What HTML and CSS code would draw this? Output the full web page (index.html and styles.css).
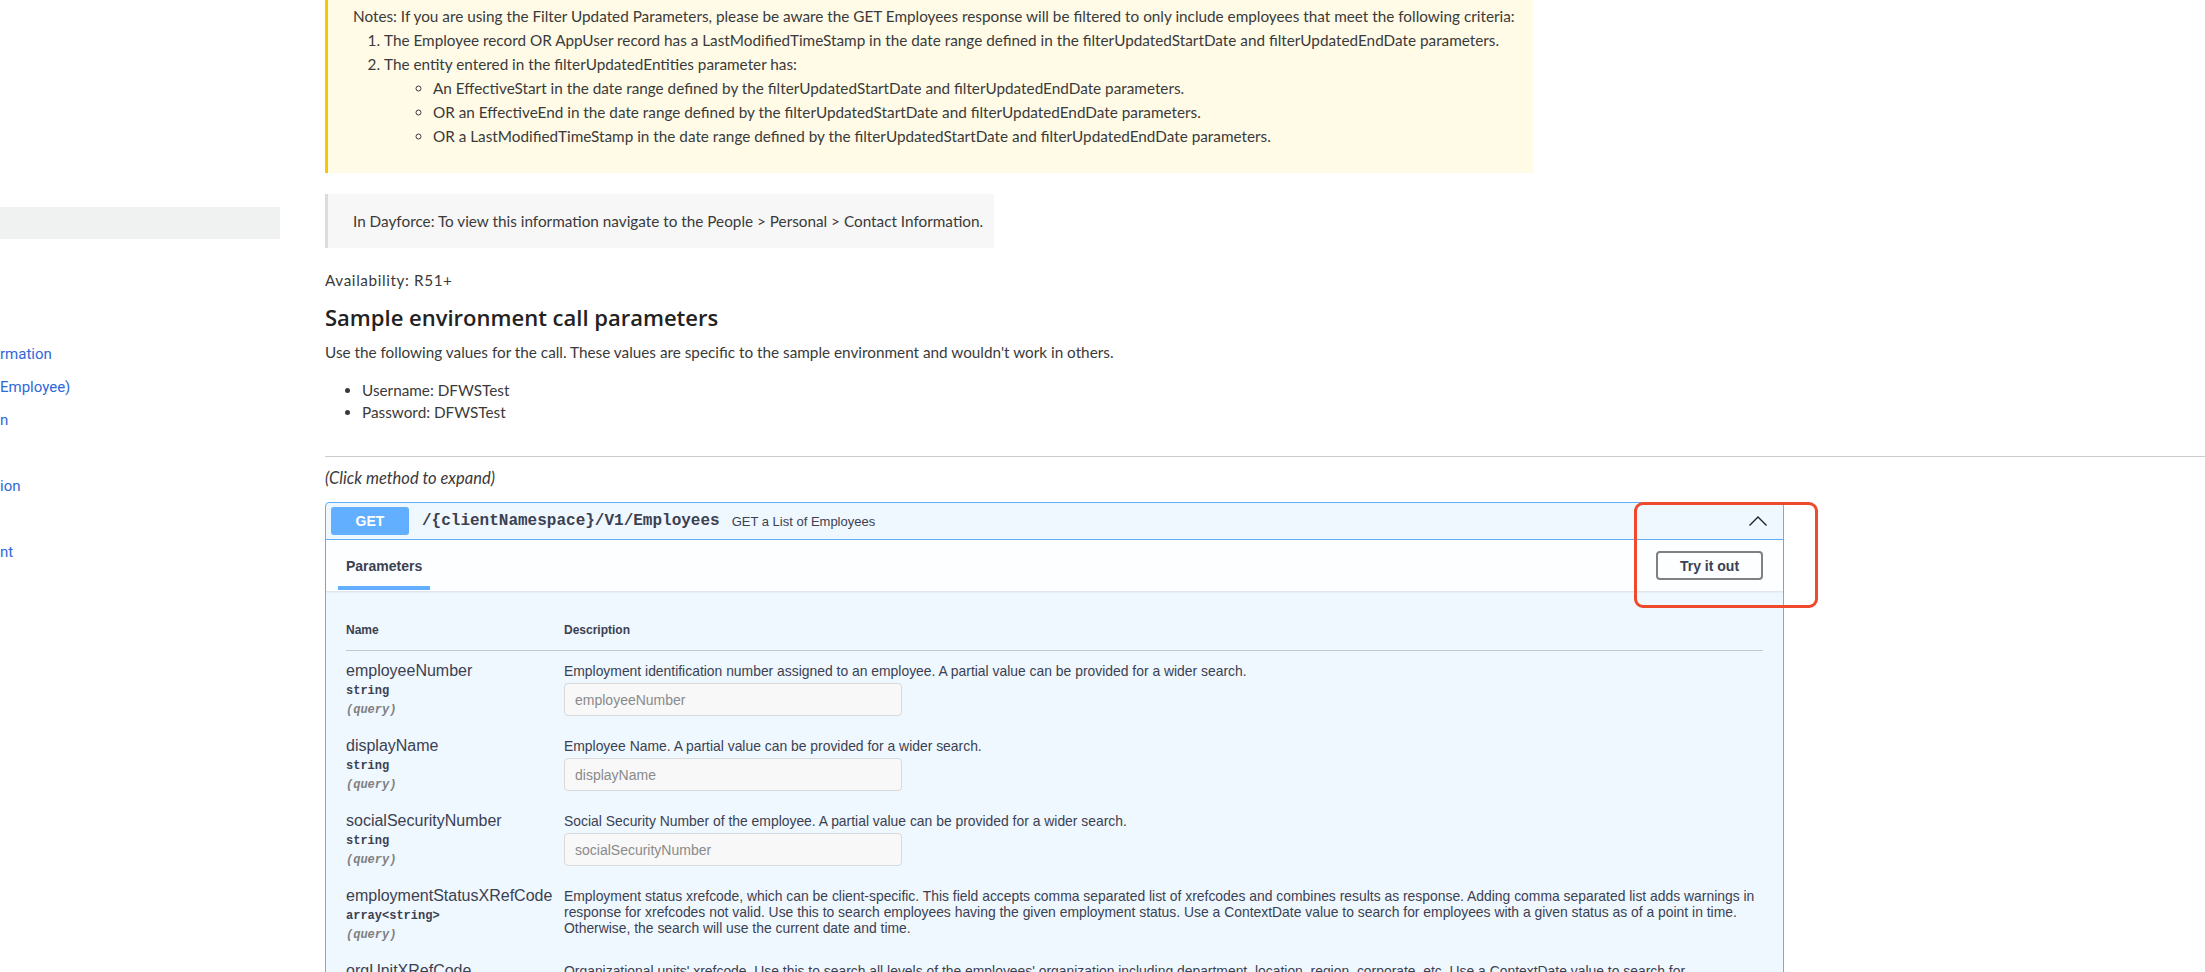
FILE: index.html
```html
<!DOCTYPE html>
<html lang="en">
<head>
  <meta charset="UTF-8" />
  <title>GET a List of Employees</title>
  <link rel="stylesheet" href="styles.css">
</head>
<body>
  <div class="page">
    <!-- Left navigation (scrolled horizontally, only the tail of each label shows) -->
    <nav class="sidenav">
      <div class="nav-active"></div>
      <ul class="nav-list">
        <li></li>
        <li></li>
        <li></li>
        <li><a href="#">rmation</a></li>
        <li><a href="#">Employee)</a></li>
        <li><a href="#">n</a></li>
        <li></li>
        <li><a href="#">ion</a></li>
        <li></li>
        <li><a href="#">nt</a></li>
      </ul>
    </nav>

    <main class="content">
      <div class="notes">
        <p>Notes: If you are using the Filter Updated Parameters, please be aware the GET Employees response will be filtered to only include employees that meet the following criteria:</p>
        <ol>
          <li>The Employee record OR AppUser record has a LastModifiedTimeStamp in the date range defined in the filterUpdatedStartDate and filterUpdatedEndDate parameters.</li>
          <li>The entity entered in the filterUpdatedEntities parameter has:
            <ul>
              <li>An EffectiveStart in the date range defined by the filterUpdatedStartDate and filterUpdatedEndDate parameters.</li>
              <li>OR an EffectiveEnd in the date range defined by the filterUpdatedStartDate and filterUpdatedEndDate parameters.</li>
              <li>OR a LastModifiedTimeStamp in the date range defined by the filterUpdatedStartDate and filterUpdatedEndDate parameters.</li>
            </ul>
          </li>
        </ol>
      </div>

      <div class="callout">In Dayforce: To view this information navigate to the People &gt; Personal &gt; Contact Information.</div>

      <p class="availability">Availability: R51+</p>
      <h2>Sample environment call parameters</h2>
      <p class="intro">Use the following values for the call. These values are specific to the sample environment and wouldn't work in others.</p>
      <ul class="creds">
        <li>Username: DFWSTest</li>
        <li>Password: DFWSTest</li>
      </ul>

      <hr class="sep">
      <p class="hint">(Click method to expand)</p>

      <!-- Swagger operation block -->
      <div class="opblock">
        <div class="opblock-summary">
          <span class="method">GET</span>
          <span class="path">/{clientNamespace}/V1/Employees</span>
          <span class="summary-desc">GET a List of Employees</span>
          <svg class="arrow" width="20" height="12" viewBox="0 0 20 12"><polyline points="1.5,10.5 10,2 18.5,10.5" fill="none" stroke="#222" stroke-width="1.4"/></svg>
        </div>
        <div class="section-header">
          <div class="tab">Parameters</div>
          <button class="try-out">Try it out</button>
        </div>
        <div class="params">
          <div class="params-head">
            <div>Name</div>
            <div>Description</div>
          </div>
          <div class="param-row">
            <div class="param-name">
              <div class="pname">employeeNumber</div>
              <div class="ptype">string</div>
              <div class="pin">(query)</div>
            </div>
            <div class="param-desc">
              <p>Employment identification number assigned to an employee. A partial value can be provided for a wider search.</p>
              <input type="text" placeholder="employeeNumber">
            </div>
          </div>
          <div class="param-row">
            <div class="param-name">
              <div class="pname">displayName</div>
              <div class="ptype">string</div>
              <div class="pin">(query)</div>
            </div>
            <div class="param-desc">
              <p>Employee Name. A partial value can be provided for a wider search.</p>
              <input type="text" placeholder="displayName">
            </div>
          </div>
          <div class="param-row">
            <div class="param-name">
              <div class="pname">socialSecurityNumber</div>
              <div class="ptype">string</div>
              <div class="pin">(query)</div>
            </div>
            <div class="param-desc">
              <p>Social Security Number of the employee. A partial value can be provided for a wider search.</p>
              <input type="text" placeholder="socialSecurityNumber">
            </div>
          </div>
          <div class="param-row">
            <div class="param-name">
              <div class="pname">employmentStatusXRefCode</div>
              <div class="ptype">array&lt;string&gt;</div>
              <div class="pin">(query)</div>
            </div>
            <div class="param-desc">
              <p>Employment status xrefcode, which can be client-specific. This field accepts comma separated list of xrefcodes and combines results as response. Adding comma separated list adds warnings in response for xrefcodes not valid. Use this to search employees having the given employment status. Use a ContextDate value to search for employees with a given status as of a point in time. Otherwise, the search will use the current date and time.</p>
            </div>
          </div>
          <div class="param-row">
            <div class="param-name">
              <div class="pname">orgUnitXRefCode</div>
              <div class="ptype">array&lt;string&gt;</div>
              <div class="pin">(query)</div>
            </div>
            <div class="param-desc">
              <p>Organizational units' xrefcode. Use this to search all levels of the employees' organization including department, location, region, corporate, etc. Use a ContextDate value to search for organizational assignments as of a point in time. Otherwise, the search will use the current date and time.</p>
            </div>
          </div>
        </div>
        <!-- red highlight drawn over the screenshot -->
        <div class="annotation"></div>
      </div>
    </main>
  </div>
</body>
</html>
```

FILE: styles.css
```css
html, body { margin: 0; padding: 0; }
body {
  font-family: Lato, "Open Sans", sans-serif;
  font-size: 15.3px;
  color: #3a3a3a;
  background: #fff;
  overflow: hidden;
}
.page { display: flex; }

/* Sidebar */
.sidenav { width: 280px; flex: none; overflow: hidden; padding-top: 207px; }
.nav-active { height: 32px; background: #f0f1f1; }
.nav-list { list-style: none; margin: 0; padding: 0; font-family: Roboto, sans-serif; font-size: 15px; }
.nav-list li { height: 33px; line-height: 33px; }
.nav-list a { color: #2f68d8; text-decoration: none; }

/* Main column */
.content { flex: 1; margin-left: 45px; min-width: 0; }
.notes {
  width: 1208px;
  box-sizing: border-box;
  background: #fffbe7;
  border-left: 3px solid #f7c600;
  padding: 4px 14px 25px 25px;
  line-height: 24px;
}
.notes p { margin: 0; }
.notes ol { margin: 0; padding-left: 31px; }
.notes ul { margin: 0; padding-left: 49px; list-style: circle; }

.callout {
  width: 669px;
  box-sizing: border-box;
  margin-top: 21px;
  padding: 17px 10px 17px 25px;
  line-height: 20px;
  white-space: nowrap;
  background: #f7f7f7;
  border-left: 3px solid #dcdcdc;
}
.availability { margin: 22px 0 0; line-height: 20px; letter-spacing: 0.6px; }
h2 {
  margin: 13px 0 0;
  font-family: "Open Sans", Lato, sans-serif;
  font-size: 22px;
  line-height: 28px;
  font-weight: 600;
  color: #222;
}
.intro { margin: 11px 0 0; line-height: 20px; }
.creds { margin: 17px 0 0; padding-left: 37px; line-height: 22px; }
.sep { margin: 33px 0 0; border: 0; border-top: 1px solid #ccc; }
.hint { margin: 11px 0 0; font-style: italic; font-size: 16.5px; line-height: 20px; }

/* Swagger opblock */
.opblock {
  position: relative;
  width: 1459px;
  box-sizing: border-box;
  margin-top: 14px;
  border: 1px solid #61affe;
  border-radius: 4px;
  background: #eff7ff;
  color: #3b4151;
  font-family: "Liberation Sans", Arial, sans-serif;
}
.opblock-summary {
  display: flex;
  align-items: center;
  padding: 4px 5px;
  border-bottom: 1px solid #61affe;
}
.method {
  width: 78px;
  height: 28px;
  line-height: 28px;
  text-align: center;
  background: #61affe;
  color: #fff;
  border-radius: 3px;
  font-weight: 700;
  font-size: 14px;
}
.path {
  margin: 0 12px 0 13px;
  font-family: "Liberation Mono", monospace;
  font-weight: 700;
  font-size: 16px;
}
.summary-desc { font-size: 13px; flex: 1; }
.arrow { margin-right: 10px; }

.section-header {
  display: flex;
  align-items: center;
  justify-content: space-between;
  min-height: 51px;
  padding: 0 20px;
  background: rgba(255, 255, 255, 0.8);
  box-shadow: 0 1px 2px rgba(0, 0, 0, 0.1);
}
.tab {
  position: relative;
  align-self: stretch;
  display: flex;
  align-items: center;
  font-size: 14px;
  font-weight: 700;
}
.tab::after {
  content: "";
  position: absolute;
  left: -10%;
  width: 120%;
  bottom: 1px;
  height: 4px;
  background: #61affe;
}
.try-out {
  width: 107px;
  height: 29px;
  border: 2px solid #808080;
  border-radius: 4px;
  background: transparent;
  color: #3b4151;
  font-family: inherit;
  font-size: 14px;
  font-weight: 700;
}

.params { padding: 20px 20px 0; }
.params-head, .param-row { display: grid; grid-template-columns: 218px 1fr; }
.params-head {
  padding: 12px 0;
  font-size: 12px;
  font-weight: 700;
  line-height: 15px;
  border-bottom: 1px solid rgba(59, 65, 81, 0.25);
}
.param-row { padding: 10px 0 6px; }
.pname { font-size: 16px; line-height: 20px; }
.ptype, .pin { font-family: "Liberation Mono", monospace; font-size: 12px; font-weight: 700; line-height: 19px; }
.ptype { margin-top: 1px; }
.pin { font-style: italic; color: #808080; }
.param-desc p { margin: 2px 0 0; font-size: 13.9px; line-height: 16px; }
.param-desc input {
  display: block;
  width: 338px;
  height: 33px;
  box-sizing: border-box;
  margin: 4px 0 4px;
  padding: 0 10px;
  border: 1px solid #d9d9d9;
  border-radius: 4px;
  background: #f8f8f8;
  font-family: inherit;
  font-size: 14px;
}
.param-desc input::placeholder { color: #8a8a8a; }

.annotation {
  position: absolute;
  left: 1308px;
  top: -1px;
  width: 184px;
  height: 106px;
  box-sizing: border-box;
  border: 3px solid #ee4a2b;
  border-radius: 9px;
}
```
